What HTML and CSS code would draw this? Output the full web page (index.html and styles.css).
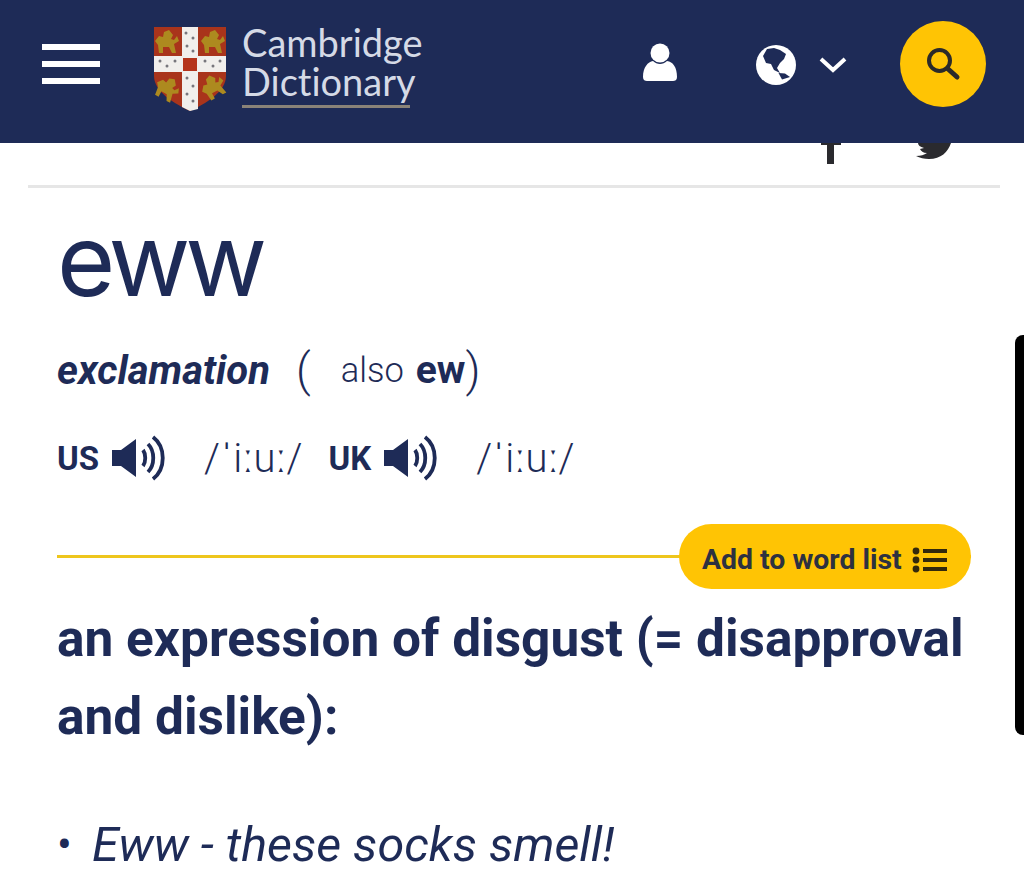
FILE: index.html
```html
<!DOCTYPE html>
<html lang="en">
<head>
    <meta charset="UTF-8">
    <title>eww | Cambridge Dictionary</title>
    <link rel="stylesheet" href="styles.css">
</head>
<body>
    <header class="topbar">
        <div class="burger"><span></span><span></span><span></span></div>
        <a class="logo">
            <svg class="crest" width="74" height="86" viewBox="0 0 74 86">
                <defs>
                    <path id="lion" d="M2 14L6 9L10 10L11 5L16 3L20 8L18 12L21 13L24 9L26 14L21 17L23 26H19L16 20L10 20L10 26H6L5 18Z" fill="#ad8a1f"/>
                </defs>
                <path d="M1 1H73V50C73 66 52 78 37 85C22 78 1 66 1 50Z" fill="#a9341b"/>
                <use href="#lion" x="0" y="1"/>
                <use href="#lion" x="46" y="1"/>
                <use href="#lion" transform="translate(1 47) rotate(28 12 14)"/>
                <use href="#lion" transform="translate(46 47) rotate(-28 12 14)"/>
                <path d="M29 1H45V30H73V46H45V83L37 85L29 81V46H1V30H29Z" fill="#f1efec"/>
                <rect x="30" y="32" width="14" height="13" fill="#b5341c"/>
                <g fill="#77767c">
                    <circle cx="33" cy="7" r="1.5"/><circle cx="40" cy="12" r="1.5"/><circle cx="34" cy="20" r="1.5"/><circle cx="40" cy="25" r="1.5"/>
                    <circle cx="7" cy="35" r="1.5"/><circle cx="14" cy="40" r="1.5"/><circle cx="22" cy="35" r="1.5"/>
                    <circle cx="52" cy="35" r="1.5"/><circle cx="60" cy="40" r="1.5"/><circle cx="67" cy="35" r="1.5"/>
                    <circle cx="34" cy="52" r="1.5"/><circle cx="40" cy="60" r="1.5"/><circle cx="34" cy="68" r="1.5"/><circle cx="40" cy="75" r="1.5"/>
                </g>
            </svg>
            <span class="wordmark">Cambridge<br>Dictionary</span>
        </a>
        <svg class="user" width="36" height="38" viewBox="0 0 36 38">
            <circle cx="18" cy="10" r="9.5" fill="#fff"/>
            <path d="M1 34C1 24 6 19 11 18C15 22 21 22 25 18C31 19 35 24 35 34C35 37 33 38 31 38H5C3 38 1 37 1 34Z" fill="#fff"/>
        </svg>
        <svg class="globe" width="40" height="40" viewBox="0 0 40 40">
            <circle cx="20" cy="20" r="20" fill="#fff"/>
            <path d="M7 11L11 4L18 3L24 5L30 9L28 14L24 18L21 23L24 28L18 25L15 19L10 18Z" fill="#1e2b57"/>
            <path d="M22.5 28L29 28.5L34 32L26 34.5Z" fill="#1e2b57"/>
        </svg>
        <svg class="chevron" width="28" height="18" viewBox="0 0 28 18">
            <path d="M2 4L14 15L26 4" fill="none" stroke="#fff" stroke-width="4"/>
        </svg>
        <a class="search">
            <svg width="36" height="36" viewBox="0 0 36 36">
                <circle cx="14.5" cy="14.5" r="10.5" fill="none" stroke="#2b2a2a" stroke-width="4"/>
                <path d="M22.5 22.5L32 31" stroke="#2b2a2a" stroke-width="5" stroke-linecap="round"/>
            </svg>
        </a>
    </header>

    <div class="share">
        <svg class="fb" width="24" height="21" viewBox="0 0 24 21">
            <path d="M8 0H15V21H8ZM2 0H22V2H2Z" fill="#2a2a2e"/>
        </svg>
        <svg class="tw" width="38" height="16" viewBox="0 0 38 16">
            <path d="M3 0H36C33 9 26 16 14 16C9 16 5 15 1 13C6 13 9 12 12 10C8 10 6 8 5 6L9 5C5 4 3 2 3 0Z" fill="#2a2a2e"/>
        </svg>
    </div>

    <main class="entry">
        <h1>eww</h1>
        <p class="pos"><b class="label">exclamation</b><span class="paren first">(</span><span class="also">also</span><b class="variant">ew</b><span class="paren">)</span></p>
        <div class="pron">
            <b>US</b>
            <svg class="speaker" width="54" height="46" viewBox="0 0 54 46">
                <path d="M1 15H10L25 4V42L10 31H1Z" fill="#1e2b57"/>
                <path d="M32 15C35 19 35 27 32 31M37 9C44 16 44 30 37 37M42 2C55 12 55 34 42 44" fill="none" stroke="#1e2b57" stroke-width="3.8"/>
            </svg>
            <span class="ipa">/ˈiːuː/</span>
            <b class="uk">UK</b>
            <svg class="speaker" width="54" height="46" viewBox="0 0 54 46">
                <path d="M1 15H10L25 4V42L10 31H1Z" fill="#1e2b57"/>
                <path d="M32 15C35 19 35 27 32 31M37 9C44 16 44 30 37 37M42 2C55 12 55 34 42 44" fill="none" stroke="#1e2b57" stroke-width="3.8"/>
            </svg>
            <span class="ipa">/ˈiːuː/</span>
        </div>
        <div class="wordlist">
            <a class="add">Add to word list
                <svg width="36" height="26" viewBox="0 0 36 26">
                    <circle cx="4" cy="4" r="3.4" fill="#33290c"/><circle cx="4" cy="13" r="3.4" fill="#33290c"/><circle cx="4" cy="22" r="3.4" fill="#33290c"/>
                    <path d="M11 2H35V6H11ZM11 11H35V15H11ZM11 20H35V24H11Z" fill="#33290c"/>
                </svg>
            </a>
        </div>
        <h2>an expression of disgust (= disapproval and dislike):</h2>
        <ul class="examples">
            <li>Eww - these socks smell!</li>
        </ul>
    </main>

    <div class="scrollbar"></div>
</body>
</html>
```

FILE: styles.css
```css
body{
    margin:0;
    height:892px;
    overflow:hidden;
    background:#fff;
    color:#1e2b57;
    font-family:Roboto, "Liberation Sans", sans-serif;
}

.topbar{
    height:143px;
    background:#1e2b57;
    display:flex;
    align-items:center;
    box-sizing:border-box;
    padding:0 0 15px 42px;
    svg{
        flex:none;
    }
}

.burger{
    width:58px;
    display:flex;
    flex-direction:column;
    gap:11px;
    margin-bottom:1px;
    span{
        height:6px;
        background:#fff;
    }
}

.logo{
    display:flex;
    align-items:flex-start;
    margin-left:53px;
    margin-top:10px;
}

.wordmark{
    margin:-3px 0 0 15px;
    height:85px;
    box-sizing:border-box;
    width:168px;
    white-space:nowrap;
    font-family:Lato, sans-serif;
    font-variant-ligatures:none;
    font-size:38px;
    line-height:39px;
    color:#d5dae6;
    border-bottom:3px solid #8a8378;
}

.user{
    margin-left:232px;
    margin-bottom:4px;
}

.globe{
    margin-left:78px;
    margin-top:1px;
}

.chevron{
    margin-left:23px;
}

.search{
    width:86px;
    height:86px;
    border-radius:50%;
    background:#ffc404;
    margin-left:53px;
    display:flex;
    align-items:center;
    justify-content:center;
}

.share{
    height:42px;
    margin:0 24px 0 28px;
    border-bottom:3px solid #e6e6e6;
    display:flex;
    align-items:flex-start;
    justify-content:flex-end;
    .fb{
        margin-right:72px;
    }
    .tw{
        margin-right:47px;
    }
}

.entry{
    padding:0 57px;
}

h1{
    margin:22px 0 0;
    font-family:Inter, sans-serif;
    font-weight:400;
    font-size:100px;
    line-height:100px;
    letter-spacing:-5px;
}

.pos{
    margin:30px 0 0;
    display:flex;
    align-items:center;
    height:60px;
    .label{
        font-size:40px;
        font-style:italic;
    }
    .paren{
        font-size:46px;
        font-weight:300;
    }
    .first{
        margin:0 30px 0 26px;
    }
    .also{
        font-size:34.5px;
        font-weight:300;
    }
    .variant{
        font-size:39px;
        margin-left:12px;
    }
}

.pron{
    margin-top:35px;
    display:flex;
    align-items:center;
    height:46px;
    b{
        font-size:33px;
    }
    .speaker{
        margin-left:12px;
    }
    .ipa{
        font-size:40px;
        font-weight:300;
        margin-left:39px;
    }
    .uk{
        margin-left:26px;
    }
}

.wordlist{
    margin-top:43px;
    display:flex;
    align-items:center;
    justify-content:flex-end;
    margin-right:-4px;
    background:linear-gradient(#eec61c, #eec61c) left center / 100% 3px no-repeat;
}

.add{
    width:292px;
    height:65px;
    box-sizing:border-box;
    padding:6px 0 0 23px;
    border-radius:33px;
    background:#ffc404;
    display:flex;
    align-items:center;
    gap:10px;
    color:#2d3140;
    font-size:28.4px;
    font-weight:700;
}

h2{
    margin:11px 0 0;
    font-size:51.4px;
    line-height:78px;
    font-weight:700;
    margin-right:-10px;
}

.examples{
    margin:59px 0 0;
    padding:0;
    list-style:none;
    li{
        font-size:48.5px;
        font-style:italic;
        font-weight:400;
        line-height:60px;
        padding-left:35px;
        position:relative;
        &::before{
            content:"•";
            font-style:normal;
            font-size:44px;
            position:absolute;
            left:0;
        }
    }
}

.scrollbar{
    position:absolute;
    left:1015px;
    top:335px;
    width:9px;
    height:400px;
    background:#000;
    border-radius:8px 0 0 8px;
}
```
